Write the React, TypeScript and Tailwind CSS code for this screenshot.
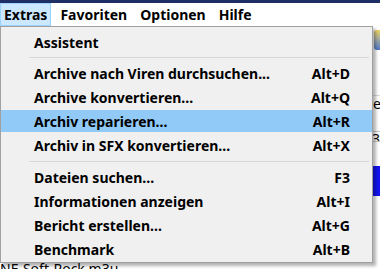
import React from 'react'

type Item = { label: string; keys?: string; active?: boolean }

const groups: Item[][] = [
  [{ label: 'Assistent' }],
  [
    { label: 'Archive nach Viren durchsuchen...', keys: 'Alt+D' },
    { label: 'Archive konvertieren...', keys: 'Alt+Q' },
    { label: 'Archiv reparieren...', keys: 'Alt+R', active: true },
    { label: 'Archiv in SFX konvertieren...', keys: 'Alt+X' },
  ],
  [
    { label: 'Dateien suchen...', keys: 'F3' },
    { label: 'Informationen anzeigen', keys: 'Alt+I' },
    { label: 'Bericht erstellen...', keys: 'Alt+G' },
    { label: 'Benchmark', keys: 'Alt+B' },
  ],
]

const menus = ['Extras', 'Favoriten', 'Optionen', 'Hilfe']

function MenuRow({ item }: { item: Item }) {
  return (
    <div className="h-[24px] py-[1px]">
      <div
        className={`flex items-center h-[22px] pl-[33px] pr-[22px] ${item.active ? 'bg-[#91c9f7]' : ''}`}
      >
        <span className="flex-1">{item.label}</span>
        {item.keys && <span>{item.keys}</span>}
      </div>
    </div>
  )
}

export default function App() {
  return (
    <div
      className="relative w-[380px] h-[269px] overflow-hidden bg-white text-[14px] text-black"
      style={{ fontFamily: '"Noto Sans", "Open Sans", sans-serif' }}
    >
      <div className="h-[3px] bg-[#1e2f66]" />
      <div className="flex h-[23px] items-stretch gap-[5px] font-bold">
        {menus.map((m, i) => (
          <div
            key={m}
            className={`flex items-center px-[3px] ${i === 0 ? 'bg-[#cce8ff] border border-[#99d1ff]' : 'border border-transparent'}`}
          >
            {m}
          </div>
        ))}
      </div>

      {/* window content behind the menu */}
      <div className="flex flex-col">
        <div className="flex h-[70px] items-start justify-end pt-[4px] border-b border-[#d8d8d8]">
          <div className="w-[10px] h-[20px] -mr-[4px] rounded-[3px] bg-gradient-to-b from-[#f2d35c] to-[#4f76c8]" />
        </div>
        <div className="flex flex-col items-end">
          <div className="h-[16px] w-[10px] -mr-[3px] leading-[16px]">e</div>
          <div className="h-[20px] w-full border-b border-[#c8c8c8]" />
          <div className="h-[10px] w-[10px] -mr-[2px] leading-[14px] border-b border-[#c8c8c8] overflow-hidden">3y</div>
          <div className="h-[24px]" />
          <div className="h-[30px] w-[7px] bg-[#1414f0]" />
        </div>
      </div>
      <div className="absolute left-0 top-[260px] leading-[18px]">NE-Soft-Rock.m3u</div>

      <div className="absolute left-0 top-[26px] w-[373px] pt-[3px] pb-[1px] bg-[#f0f0f0] border border-[#a0a0a0] font-bold shadow-[3px_3px_3px_rgba(0,0,0,0.3)]">
        {groups.map((g, gi) => (
          <div key={gi}>
            {gi > 0 && (
              <div className={`${gi === 1 ? 'h-[7px]' : 'h-[8px]'} flex items-center pl-[28px] pr-[3px]`}>
                <div className="h-px w-full bg-[#d7d7d7]" />
              </div>
            )}
            {g.map((it) => (
              <MenuRow key={it.label} item={it} />
            ))}
          </div>
        ))}
      </div>
    </div>
  )
}
